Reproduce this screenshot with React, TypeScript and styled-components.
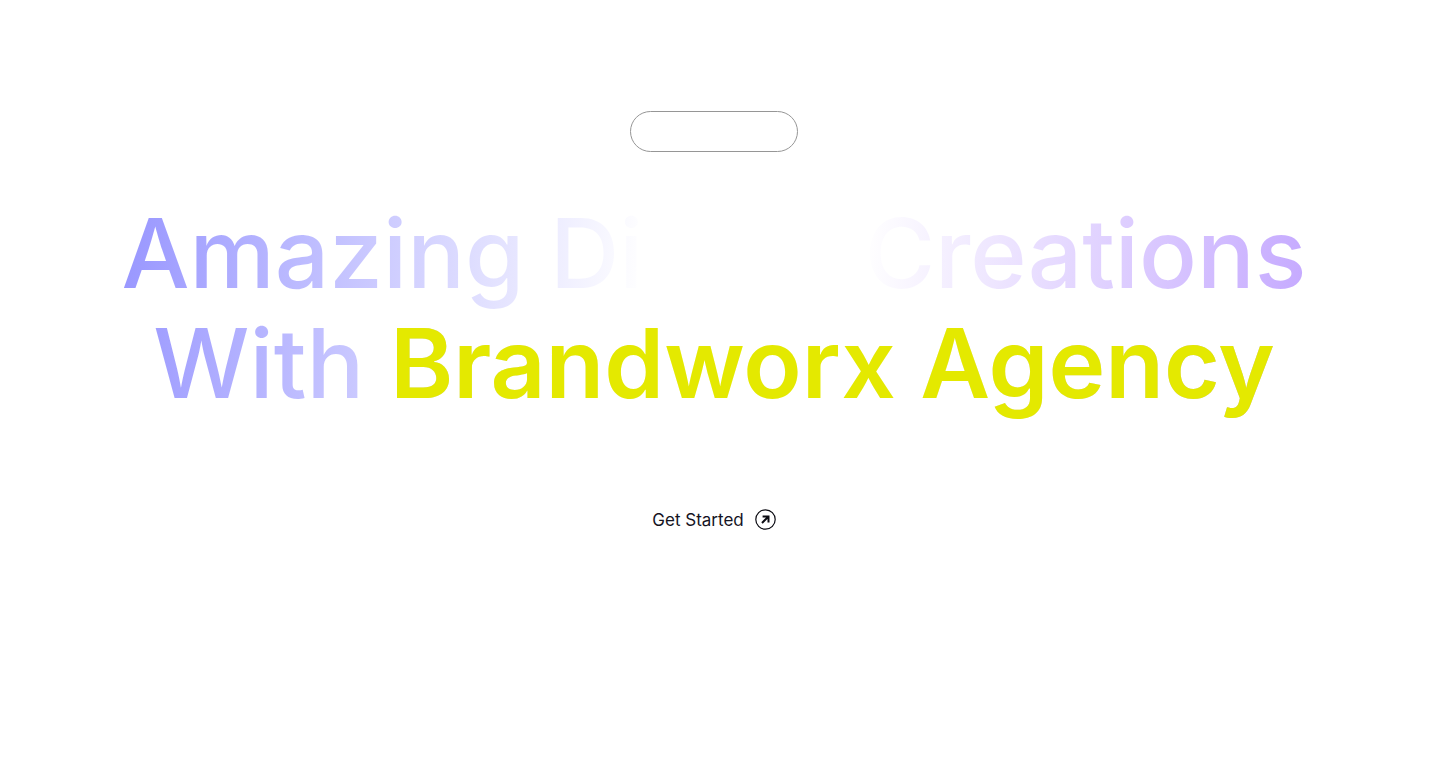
import React from "react";
import styled, { createGlobalStyle } from "styled-components";

const GlobalStyle = createGlobalStyle`
  *, *::before, *::after { box-sizing: border-box; }
  body {
    margin: 0;
    background: #ffffff;
    font-family: Inter, "Liberation Sans", sans-serif;
  }
`;

const Hero = styled.main`
  display: flex;
  flex-direction: column;
  align-items: center;
  min-height: 100vh;
  padding: 111px 8px 48px 0;
`;

const Pill = styled.div`
  width: 168px;
  height: 41px;
  border: 1px solid #969696;
  border-radius: 24px;
`;

const Title = styled.h1`
  margin: 46px 0 0;
  font-size: 96px;
  line-height: 110px;
  font-weight: 500;
  text-align: center;
  color: transparent;
  background: linear-gradient(95deg, #9896ff 0%, #e4e3ff 32%, #ffffff 44%, #ffffff 62%, #c4a8ff 100%);
  background-clip: text;
  -webkit-background-clip: text;
`;

const Line = styled.span`
  display: block;
  white-space: nowrap;
`;

const Brand = styled.strong`
  font-weight: 600;
  color: #e4e900;
`;

const StartLink = styled.a`
  display: flex;
  align-items: flex-start;
  gap: 11px;
  margin-top: 91px;
  font-size: 17px;
  line-height: 22px;
  color: #14141f;
  text-decoration: none;
`;

const ArrowIcon = () => (
  <svg width="21" height="21" viewBox="0 0 21 21" fill="none" stroke="#0b0b12" aria-hidden="true">
    <circle cx="10.5" cy="10.5" r="9.7" strokeWidth="1.2" />
    <path d="M7 14L13.2 7.8M7.6 7.5H13.5V13.4" strokeWidth="2" />
  </svg>
);

export default function App() {
  return (
    <>
      <GlobalStyle />
      <Hero>
        <Pill />
        <Title>
          <Line>Amazing Digital Creations</Line>
          <Line>
            With <Brand>Brandworx Agency</Brand>
          </Line>
        </Title>
        <StartLink href="#start">
          Get Started
          <ArrowIcon />
        </StartLink>
      </Hero>
    </>
  );
}
